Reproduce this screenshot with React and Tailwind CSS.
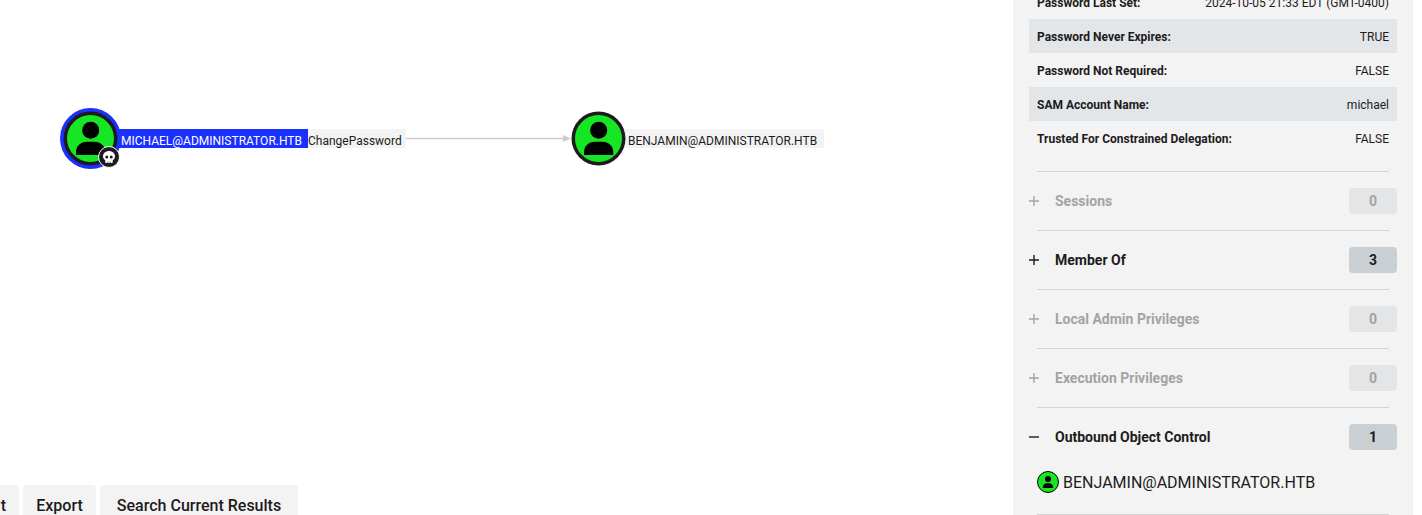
import React from 'react';
import { FaSkull, FaUser } from 'react-icons/fa6';

const properties = [
  ['Password Last Set:', '2024-10-05 21:33 EDT (GMT-0400)'],
  ['Password Never Expires:', 'TRUE'],
  ['Password Not Required:', 'FALSE'],
  ['SAM Account Name:', 'michael'],
  ['Trusted For Constrained Delegation:', 'FALSE'],
];

const sections = [
  { name: 'Sessions', count: 0 },
  { name: 'Member Of', count: 3 },
  { name: 'Local Admin Privileges', count: 0 },
  { name: 'Execution Privileges', count: 0 },
  { name: 'Outbound Object Control', count: 1, items: ['BENJAMIN@ADMINISTRATOR.HTB'] },
];

function UserNode({ className, selected, owned }) {
  return (
    <div className={`absolute size-[62px] ${className}`}>
      <svg viewBox="0 0 62 62" className="size-full" aria-hidden="true">
        {selected && <circle cx="30.5" cy="30.5" r="30.5" fill="#1a30ff" />}
        <circle cx="30.5" cy="30.5" r="27" fill="#1d1b20" />
        <circle cx="30.5" cy="30.5" r="23.5" fill="#17e625" />
        <circle cx="30.7" cy="22.3" r="8.5" fill="#000" />
        <path d="M16 47v-2.5c0-6.5 4.5-10.8 11-10.8h7.3c6.5 0 11 4.3 11 10.8v2.5z" fill="#000" />
      </svg>
      {owned && (
        <span className="absolute bottom-0.5 right-0.5 flex size-[22px] items-center justify-center rounded-full border border-white bg-[#1d1b20] text-white">
          <FaSkull size={12} />
        </span>
      )}
    </div>
  );
}

function Toggle({ open }) {
  return (
    <svg width="10" height="10" viewBox="0 0 10 10" fill="none" stroke="currentColor" strokeWidth="1.4" aria-hidden="true">
      <path d={open ? 'M0 5h10' : 'M0 5h10M5 0v10'} />
    </svg>
  );
}

function Section({ name, count, items }) {
  return (
    <section>
      <hr className="mx-2 border-t border-[#d1d3d4]" />
      <button
        type="button"
        disabled={count === 0}
        className={`flex h-[58px] w-full items-center text-left text-sm font-bold ${count === 0 ? 'text-[#a3a3a3]' : 'text-[#1d1b20]'}`}
      >
        <Toggle open={Boolean(items)} />
        <span className="ml-4 flex-1">{name}</span>
        <span className={`flex h-[26px] w-12 items-center justify-center rounded ${count === 0 ? 'bg-[#e3e5e7]' : 'bg-[#cacfd3]'}`}>
          {count}
        </span>
      </button>
      {items && (
        <ul className="px-2 pb-4">
          {items.map((item) => (
            <li key={item} className="flex h-8 items-center gap-1 text-base">
              <span className="flex size-[22px] items-center justify-center rounded-full border border-black bg-[#17e625] text-black">
                <FaUser size={12} />
              </span>
              <span className="pt-0.5">{item}</span>
            </li>
          ))}
        </ul>
      )}
    </section>
  );
}

const toolButton = 'h-10 shrink-0 bg-[#f3f3f3] pt-0.5 text-base font-medium';
const graphLabel = 'absolute top-[129px] h-[19px] whitespace-nowrap text-xs leading-6';

export default function App() {
  return (
    <div className="flex h-screen overflow-hidden bg-white pr-[9px] font-['Roboto',sans-serif] text-[#1d1b20]">
      <main className="relative flex min-w-0 flex-1 flex-col justify-end overflow-hidden">
        <svg className="absolute left-[406px] top-[134px]" width="166" height="10" viewBox="0 0 166 10" aria-hidden="true">
          <path d="M0 4.5h158" stroke="#ccc" strokeWidth="1.5" />
          <path d="M157 1l8 3.5-8 3.500z" fill="#ccc" />
        </svg>
        <span className={`${graphLabel} left-[117px] w-[191px] bg-[#1a30ff] px-1 text-white`}>
          MICHAEL@ADMINISTRATOR.HTB
        </span>
        <span className={`${graphLabel} left-[308px] w-[98px] bg-[#f3f3f3]`}>
          ChangePassword
        </span>
        <span className={`${graphLabel} left-[624px] w-[200px] bg-[#f3f3f3] px-1`}>
          BENJAMIN@ADMINISTRATOR.HTB
        </span>
        <UserNode className="left-[60px] top-[108px]" selected owned />
        <UserNode className="left-[568px] top-[108px]" />

        <div className="-mb-2.5 flex gap-1">
          <button type="button" className={`${toolButton} w-[19px] rounded-r pr-3`}>t</button>
          <button type="button" className={`${toolButton} min-w-[73px] rounded px-3`}>Export</button>
          <button type="button" className={`${toolButton} min-w-[198px] rounded px-3`}>Search Current Results</button>
        </div>
      </main>

      <aside className="w-[400px] shrink-0 overflow-hidden bg-[#f3f3f3] px-4">
        <dl className="-mt-[15px] mb-4 text-xs">
          {properties.map(([label, value]) => (
            <div key={label} className="flex h-[34px] items-center justify-between px-2 pt-0.5 even:bg-[#e2e6e9]">
              <dt className="font-bold">{label}</dt>
              <dd>{value}</dd>
            </div>
          ))}
        </dl>
        {sections.map((section) => (
          <Section key={section.name} {...section} />
        ))}
        <hr className="mx-2 border-t border-[#d1d3d4]" />
      </aside>
    </div>
  );
}
